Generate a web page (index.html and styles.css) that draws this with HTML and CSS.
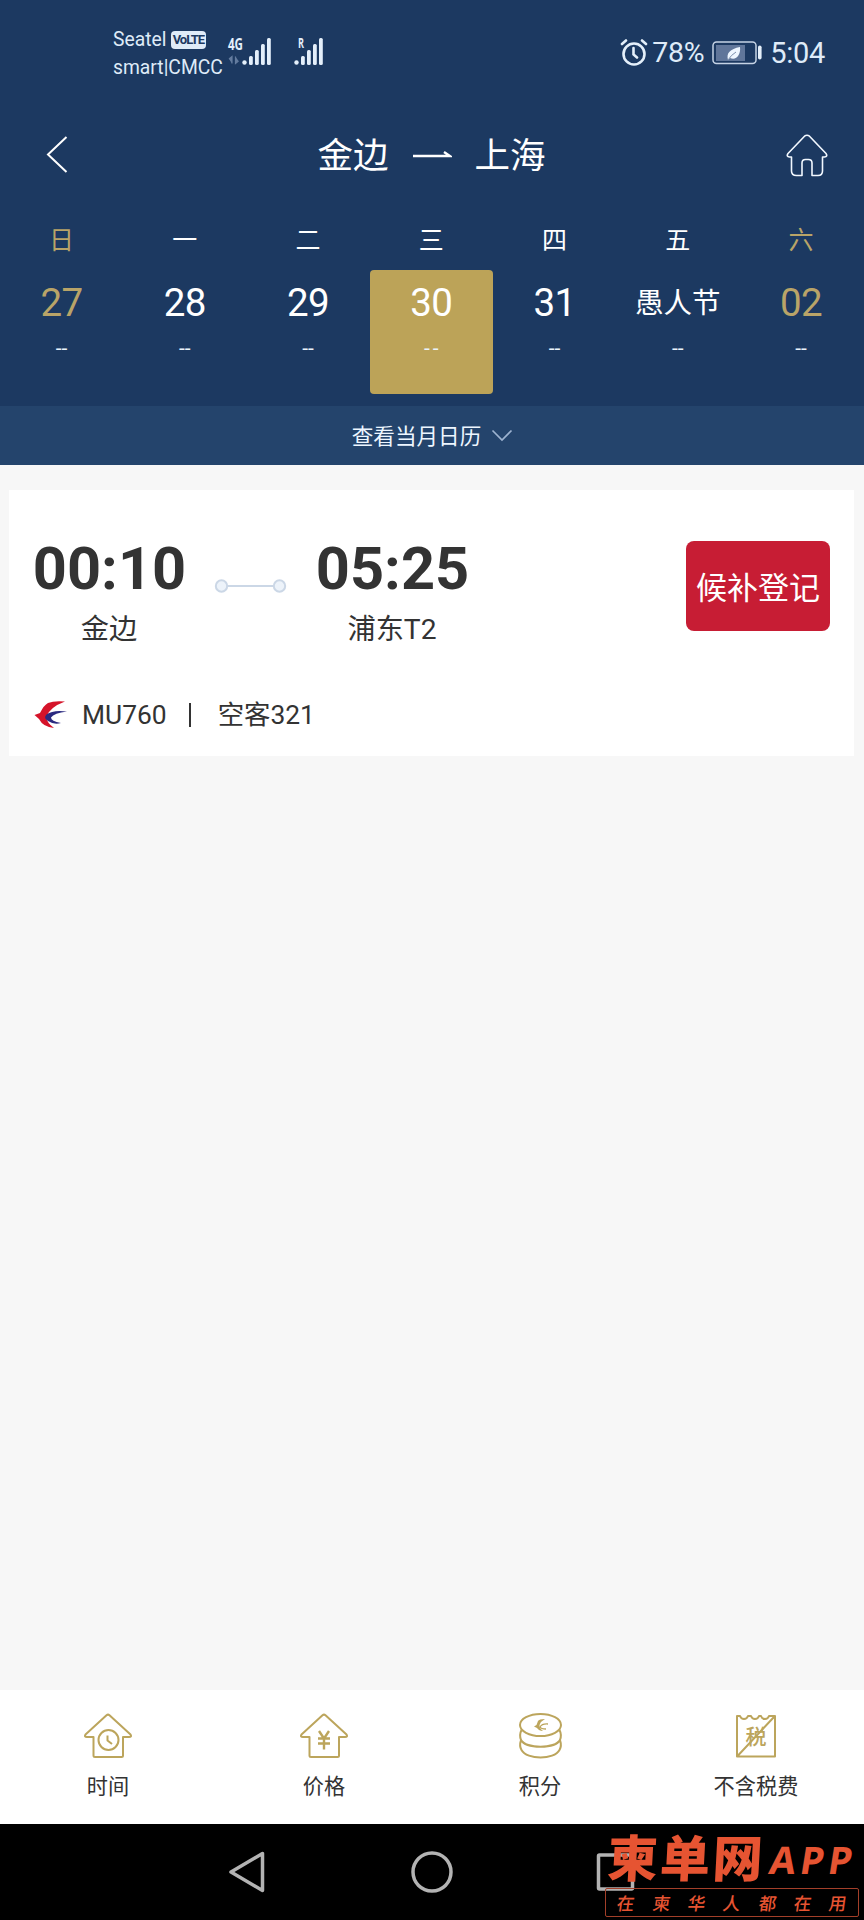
FILE: index.html
```html
<!DOCTYPE html>
<html lang="zh-CN">
<head>
<meta charset="utf-8">
<title>金边 - 上海</title>
<link rel="stylesheet" href="styles.css">
</head>
<body>
<div class="screen">
  <header class="header">
    <div class="status">
      <div class="carriers">
        <div class="carrier">Seatel<span class="volte">VoLTE</span></div>
        <div class="carrier">smart|CMCC</div>
      </div>
      <svg class="signals" width="100" height="32" viewBox="0 0 100 32">
        <g fill="#e4effa">
          <text x="0" y="14" class="net" textLength="15" lengthAdjust="spacingAndGlyphs">4G</text>
          <text x="70" y="12" class="net net-r" textLength="6" lengthAdjust="spacingAndGlyphs">R</text>
          <circle cx="16.500" cy="26.500" r="2.200"/><rect x="21" y="20" width="3.800" height="9" rx="1.500"/><rect x="27" y="14" width="3.800" height="15" rx="1.500"/><rect x="33" y="8" width="3.800" height="21" rx="1.500"/><rect x="39" y="2" width="3.800" height="27" rx="1.500"/>
          <circle cx="68.500" cy="26.500" r="2.200"/><rect x="73" y="20" width="3.800" height="9" rx="1.500"/><rect x="79" y="14" width="3.800" height="15" rx="1.500"/><rect x="85" y="8" width="3.800" height="21" rx="1.500"/><rect x="91" y="2" width="3.800" height="27" rx="1.500"/>
        </g>
        <path d="M1 23l3-2.500v7M10.500 25l-3 2.500v-7" fill="#647c9f" stroke="#647c9f" stroke-width="1.200"/>
      </svg>
      <div class="status-right">
        <svg width="28" height="28" viewBox="0 0 28 28" fill="none" stroke="#e4effa" stroke-width="2.600" stroke-linecap="round"><circle cx="14" cy="15" r="10.500"/><path d="M2 5l4-3.500M26 5l-4-3.500M13.500 9v6.500l3.500 3"/></svg>
        <span class="battery-text">78%</span>
        <svg class="battery" width="50" height="24" viewBox="0 0 50 24"><rect x="1" y="1" width="43" height="21.500" rx="3.500" fill="none" stroke="#c5d3e5" stroke-width="1.500"/><rect x="4" y="4" width="29" height="16" fill="#60769a"/><path d="M16 19C14 12 18 8 28 6C29 14 24 20 18 17Z" fill="#eef6ff"/><path d="M16 19Q19 14 24 11" stroke="#7c8fac" fill="none"/><rect x="46" y="4.500" width="3.600" height="14" rx="1.800" fill="#e4effa"/></svg>
        <span>5:04</span>
      </div>
    </div>
    <div class="nav">
      <svg width="22" height="38" viewBox="0 0 22 38" fill="none" stroke="#fff" stroke-width="2"><path d="M20.500 1L2 18.500L20.500 36"/></svg>
      <h1 class="route"><span>金边</span><svg width="39" height="10" viewBox="0 0 39 10"><path d="M0 5H37L31 1" fill="none" stroke="#fff" stroke-width="2.400"/></svg><span>上海</span></h1>
      <svg width="42" height="43" viewBox="0 0 42 43" fill="none" stroke="#f2f8ff" stroke-width="1.600" stroke-linejoin="round"><path d="M18.500 2.200Q21 0.300 23.500 2.200L40 19.500Q42 22.500 38.500 23H36.500V37Q36.500 41.500 32 41.500H26V29Q26 25.500 22.500 25.500H19.500Q16 25.500 16 29V41.500H10.500Q5.500 41.500 5.500 37V23H3.500Q0 22.500 2 19.500Z"/></svg>
    </div>
    <div class="week">
      <div class="day gold"><b>日</b><div class="date"><span>27</span><i>--</i></div></div>
      <div class="day"><b>一</b><div class="date"><span>28</span><i>--</i></div></div>
      <div class="day"><b>二</b><div class="date"><span>29</span><i>--</i></div></div>
      <div class="day active"><b>三</b><div class="date"><span>30</span><i>--</i></div></div>
      <div class="day"><b>四</b><div class="date"><span>31</span><i>--</i></div></div>
      <div class="day"><b>五</b><div class="date"><span class="festival">愚人节</span><i>--</i></div></div>
      <div class="day gold"><b>六</b><div class="date"><span>02</span><i>--</i></div></div>
    </div>
    <div class="month"><span>查看当月日历</span><svg width="22" height="13" viewBox="0 0 22 13"><path d="M1.500 1.500L11 11L20.500 1.500" fill="none" stroke="#9db3d0" stroke-width="1.700"/></svg></div>
  </header>
  <main class="content">
    <section class="card">
      <div class="flight">
        <div class="stop"><div class="time">00:10</div><div class="place">金边</div></div>
        <svg class="link" width="74" height="14" viewBox="0 0 74 14" fill="#edf3fa" stroke="#cbd7e6" stroke-width="2"><path d="M13 7H60"/><circle cx="7.500" cy="7" r="5.700"/><circle cx="65.500" cy="7" r="5.700"/></svg>
        <div class="stop"><div class="time">05:25</div><div class="place">浦东T2</div></div>
        <button class="book">候补登记</button>
      </div>
      <div class="plane">
        <svg width="34" height="28" viewBox="0 0 34 28"><path d="M31 0.500Q20 -0.500 14 2Q10 4 6 12L0.500 14L5 18Q9 26 20 27Q13 22 12 16Q16 6 31 0.500Z" fill="#d5142a"/><path d="M33 10.500Q19 8.500 12.500 13.500Q9 17 14 20Q20 24 27 22Q17 20 17 16.500Q20 12 33 10.500Z" fill="#2b2a80"/></svg>
        <span class="number">MU760</span><span class="bar"></span><span class="model">空客321</span>
      </div>
    </section>
  </main>
  <footer class="tabs">
    <div class="tab"><svg width="48" height="46" viewBox="0 0 48 46" fill="none" stroke="#bca55c" stroke-width="2" stroke-linejoin="round"><path d="M22.500 2.200Q24 1 25.500 2.200L46.500 21.500Q48 24 45 24H39V42.500Q39 44 37.500 44H11Q9.500 44 9.500 42.500V24H3Q0 24 1.500 21.500Z"/><circle cx="24.500" cy="27" r="10"/><path d="M23.500 22.500V27.500L28 31"/></svg>时间</div>
    <div class="tab"><svg width="48" height="46" viewBox="0 0 48 46" fill="none" stroke="#bca55c" stroke-width="2" stroke-linejoin="round"><path d="M22.500 2.200Q24 1 25.500 2.200L46.500 21.500Q48 24 45 24H39V42.500Q39 44 37.500 44H11Q9.500 44 9.500 42.500V24H3Q0 24 1.500 21.500Z"/><path d="M19 18L24 25.500L29 18M24 25.500V36.500M18 25.500H30M18 30.500H30" stroke-width="2.400"/></svg>价格</div>
    <div class="tab"><svg width="48" height="46" viewBox="0 0 48 46" fill="none" stroke="#bca55c" stroke-width="2"><ellipse cx="24.500" cy="12" rx="20.500" ry="11"/><path d="M5.500 17Q3 22 5 27C10 36 39 36 44 27Q46 22 43.500 17M5 27Q3 33 5.500 37C11 47 38 47 43.500 37Q46 33 44 27"/><path d="M29 6Q23 6 22 8L20.500 12L18 13.500L21 15Q23 18 27 18Q23 15 23.500 12Q25 8 29 6Z" fill="#bca55c" stroke="none"/><path d="M32 11Q26 10.500 24 14Q25 16 30 16" stroke-width="1.300"/></svg>积分</div>
    <div class="tab"><svg width="48" height="46" viewBox="0 0 48 46" fill="none" stroke="#bca55c" stroke-width="2" stroke-linejoin="round"><path d="M5 43.500V3H8Q9 6 12 6T16 3H19Q20 6 23 6T27 3H29Q30 6 33 6T37 3H43V43.500ZM6 42.500L42 4"/><text x="13.500" y="31" class="tax">税</text></svg>不含税费</div>
  </footer>
  <div class="system">
    <svg width="864" height="96" viewBox="0 0 864 96" fill="none" stroke="#b3b3b3" stroke-width="3.500" stroke-linejoin="round"><path d="M262.500 29.500V66.500L231 48Z"/><circle cx="432" cy="48" r="19"/><rect x="598.500" y="31" width="34" height="34" rx="1"/></svg>
    <div class="mark">
      <div class="mark-name"><span class="mark-cn">柬单网</span><span class="mark-app">APP</span></div>
      <div class="mark-slogan"><span>在</span><span>柬</span><span>华</span><span>人</span><span>都</span><span>在</span><span>用</span></div>
    </div>
  </div>
</div>
</body>
</html>
```
FILE: styles.css
```css
* { box-sizing: border-box; }
body { margin: 0; font-family: Roboto, "Noto Sans CJK SC", sans-serif; color: #333; }
svg { display: block; flex: none; }
.screen { width: 864px; height: 1920px; display: flex; flex-direction: column; background: #f7f7f7; overflow: hidden; }
.header { background: #1c3961; color: #fff; height: 465px; flex: none; display: flex; flex-direction: column; }

.status { height: 105px; padding: 26px 39px 0 113px; display: flex; align-items: flex-start; color: #dfebf8; }
.carriers { width: 115px; }
.carrier { display: flex; align-items: center; height: 28px; font-size: 19.3px; line-height: 28px; white-space: nowrap; }
.volte { margin-left: 5px; width: 35px; height: 18px; border-radius: 4px; background: #dfebf8; color: #1c3961; font-size: 13px; font-weight: 700; line-height: 18px; text-align: center; letter-spacing: -1px; padding-right: 1px; }
.signals { margin-top: 10px; overflow: visible; }
.net { font: 700 16px "Open Sans", sans-serif; }
.net-r { font-size: 14px; }
.status-right { margin-left: auto; margin-top: 9px; height: 36px; display: flex; align-items: center; font-size: 29px; line-height: 36px; }
.status-right span:last-child { letter-spacing: -0.300px; }
.battery-text { margin-left: 4px; font-size: 28.500px; letter-spacing: -0.300px; }
.battery { margin: 0 8px 0 8px; }

.nav { height: 100px; padding: 0 36px 0 46px; display: flex; align-items: center; justify-content: space-between; }
.route { margin: 0; padding: 2px 0 0 9px; display: flex; align-items: center; gap: 24px; font-size: 35.500px; line-height: 50px; font-weight: 400; }
.route span:last-child { margin-left: -1px; }

.week { display: grid; grid-template-columns: repeat(7, 123.250px); height: 201px; }
.day { display: flex; flex-direction: column; align-items: stretch; text-align: center; padding-top: 20px; }
.day b { font-size: 25px; font-weight: 400; line-height: 32px; height: 45px; }
.date { height: 124px; border-radius: 4px; display: flex; flex-direction: column; }
.date span { font-size: 38.500px; line-height: 66px; height: 64px; letter-spacing: -0.400px; }
.date .festival { font-size: 28.500px; line-height: 68px; letter-spacing: 0; }
.date i { font-style: normal; font-size: 21px; line-height: 28px; color: #eaf3fb; }
.gold b, .gold span { color: #b9a468; }
.active .date { background: #bca358; }
.active i { letter-spacing: 3px; padding-left: 3px; }

.month { height: 59px; margin-top: auto; background: #24446c; display: flex; align-items: center; justify-content: center; gap: 10px; font-size: 21.600px; line-height: 30px; color: #edf6ff; padding-left: 1px; }
.month span { padding-top: 2px; }

.content { flex: 1; padding: 25px 10px 0 9px; }
.card { height: 266px; background: #fff; padding: 0 24px 0 25px; }
.flight { height: 200px; padding-top: 50px; display: flex; align-items: flex-start; }
.stop { width: 151px; text-align: center; }
.time { font-size: 59.500px; line-height: 58px; font-weight: 700; white-space: nowrap; display: flex; justify-content: center; }
.place { margin-top: 13px; font-size: 28.200px; line-height: 37px; padding-right: 1px; }
.link { margin: 38.500px 29px 0; }
.book { margin-left: auto; margin-top: 1px; width: 144px; height: 90px; padding: 5px 0 0; border: 0; border-radius: 8px; background: #c71d34; color: #fff; font: 400 31px/85px Roboto, "Noto Sans CJK SC", sans-serif; white-space: nowrap; }
.plane { display: flex; align-items: center; height: 50px; font-size: 26.400px; line-height: 36px; }
.plane svg { margin-right: 14px; }
.model { margin-bottom: 1px; }
.bar { width: 2px; height: 24px; background: #333; margin: 0 27px 0 22px; }

.tabs { height: 134px; flex: none; background: #fff; display: grid; grid-template-columns: repeat(4, 1fr); }
.tab { display: flex; flex-direction: column; align-items: center; gap: 12px; padding-top: 23px; font-size: 21.200px; line-height: 32px; }
.tax { font: 500 21px "Noto Sans CJK SC", sans-serif; fill: #bca55c; stroke: none; }

.system { position: relative; height: 96px; flex: none; background: #000; }
.mark { position: absolute; left: 605px; top: 2px; width: 254px; color: #e65432; font-family: "Noto Sans CJK SC", sans-serif; }
.mark-name { display: flex; align-items: flex-start; height: 62px; white-space: nowrap; }
.mark-cn { font-size: 50px; line-height: 58px; font-weight: 900; letter-spacing: 2.500px; margin-left: 3px; transform: skewX(-3deg); }
.mark-app { font: 700 38px/67px "Noto Sans", sans-serif; letter-spacing: 4.500px; margin-left: 4px; transform: skewX(-9deg); }
.mark-slogan { height: 29px; border: 1px solid #a33f29; border-radius: 2px; display: grid; grid-template-columns: repeat(7, 35.400px); justify-content: center; text-align: center; font-size: 17.500px; font-weight: 500; line-height: 27px; }
.mark-slogan span { transform: skewX(-8deg); }
```
